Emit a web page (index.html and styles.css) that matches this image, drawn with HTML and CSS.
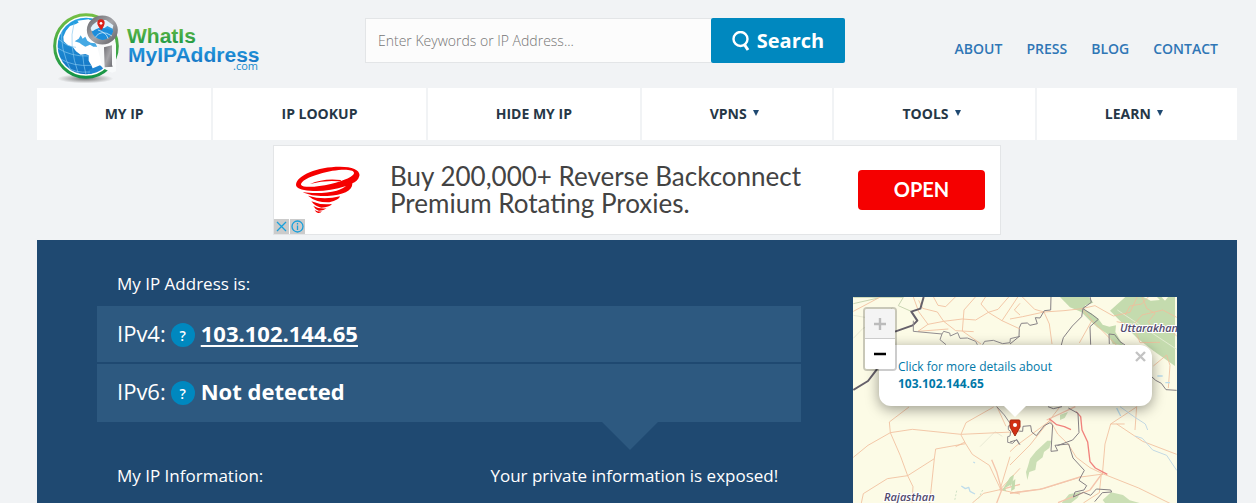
FILE: index.html
```html
<!DOCTYPE html>
<html lang="en">
<head>
<meta charset="utf-8">
<title>What Is My IP Address</title>
<link rel="stylesheet" href="styles.css">
</head>
<body>
<div class="shell">
  <header class="header">
    <a class="logo" href="#" aria-label="WhatIsMyIPAddress.com">
      <svg width="214" height="76" viewBox="48 8 214 76">
        <defs>
          <linearGradient id="green" x1="0" y1="0" x2="0" y2="1"><stop offset="0" stop-color="#74bf44"/><stop offset="1" stop-color="#149447"/></linearGradient>
          <linearGradient id="blue" x1="0" y1="0" x2="0" y2="1"><stop offset="0" stop-color="#27a5e5"/><stop offset="1" stop-color="#126fc0"/></linearGradient>
          <linearGradient id="steel" x1="0" y1="0" x2="1" y2="1"><stop offset="0" stop-color="#6f6f74"/><stop offset=".5" stop-color="#a5a5a9"/><stop offset="1" stop-color="#68686d"/></linearGradient>
          <radialGradient id="shade"><stop offset="0" stop-color="#777"/><stop offset="1" stop-color="#777" stop-opacity="0"/></radialGradient>
          <clipPath id="globe"><circle cx="114" cy="114" r="85"/></clipPath>
        </defs>
        <g transform="translate(48 8) scale(.333333)">
          <ellipse cx="112" cy="212" rx="84" ry="14" fill="url(#shade)"/>
          <circle cx="114" cy="114" r="94" fill="#fff" stroke="url(#green)" stroke-width="9"/>
          <g clip-path="url(#globe)">
            <path d="M20 20H150V42L128 36 112 44 98 40 84 48 66 54 54 68 46 86 47 100 60 112 74 116 84 130 98 140 112 138 122 142 122 158 130 172 136 186 124 210H20Z" fill="url(#blue)"/>
            <path d="M88 38L122 34 134 42 124 54 108 58 96 48Z" fill="#fff"/>
            <path d="M92 92L98 82 104 92 112 86 118 98 128 104 142 106 148 116 136 116 126 110 112 116 102 110 94 104 80 100Z" fill="#45a9e4"/>
            <path d="M122 186l34-14 14 12-20 24h-34z" fill="#1f86d2"/>
            <path d="M42 60Q34 120 70 190M78 46Q60 110 92 200M28 120Q70 146 120 144M36 152Q76 176 130 172M50 174Q80 196 126 192M104 140Q106 170 114 200M30 92Q56 116 84 118" fill="none" stroke="#86c9f0" stroke-width="2"/>
          </g>
          <path d="M146 110Q190 112 198 90L204 112V190L192 194 164 180Z" fill="#f8fafb"/>
          <path d="M168 118L192 112V170L194 176 170 178Z" fill="url(#steel)"/>
          <ellipse cx="163" cy="66" rx="39" ry="36" fill="#2c9be0" stroke="url(#steel)" stroke-width="15"/>
          <path d="M128 60Q142 34 174 36L196 52 194 62 178 54 166 62 152 60 140 70 130 68Z" fill="#dff1fb"/>
          <path d="M132 72Q152 50 196 68 188 92 164 96 144 92 132 72Z" fill="#1b8ddb"/>
          <path d="M142 88Q158 62 192 84M150 66Q176 74 180 92" stroke="#c8e8fa" stroke-width="2.500" fill="none"/>
          <path d="M160 67Q147 51 148 45A11 11 0 0 1 170 45Q170 52 160 67Z" fill="#db2118"/><circle cx="159" cy="46" r="4" fill="#fff"/>
        </g>
        <text class="logo-what" x="127" y="43" fill="url(#green)">WhatIs</text>
        <text class="logo-my" x="128" y="62" fill="url(#blue)">MyIPAddress</text>
        <text class="logo-com" x="258" y="70" text-anchor="end" fill="#168bcd">.com</text>
      </svg>
    </a>
    <form class="search">
      <input class="search-input" type="text" aria-label="Keywords or IP address" placeholder="Enter Keywords or IP Address...">
      <button class="search-button" type="button">
        <svg width="18" height="20" viewBox="0 0 18 20" fill="none" stroke="#fff"><circle cx="8.500" cy="8" r="7" stroke-width="2.400"/><path d="M12 13l4 6" stroke-width="3"/></svg>
        Search
      </button>
    </form>
    <nav class="top-links" aria-label="Site">
      <a href="#">ABOUT</a><a href="#">PRESS</a><a href="#">BLOG</a><a href="#">CONTACT</a>
    </nav>
  </header>

  <nav class="main-nav" aria-label="Main">
    <a class="w-first" href="#">MY IP</a>
    <a class="w-wide" href="#">IP LOOKUP</a>
    <a class="w-wide" href="#">HIDE MY IP</a>
    <a class="w-vpn" href="#">VPNS <span class="caret"></span></a>
    <a class="w-menu" href="#">TOOLS <span class="caret"></span></a>
    <a class="w-menu" href="#">LEARN <span class="caret"></span></a>
  </nav>

  <aside class="ad" aria-label="Advertisement">
    <svg class="ad-logo" width="64" height="48" viewBox="18 18 192 144" fill="#f50000">
      <path fill-rule="evenodd" d="M18 74C20 46 82 20 150 20 190 20 212 32 208 48 205 60 196 66 187 70 188 92 160 105 112 108 84 109 56 106 38 96 66 101 108 101 140 92 154 87 164 82 168 78 130 90 92 95 60 92 34 90 18 84 18 74ZM33 74C38 84 80 82 122 72 166 61 194 48 192 38 188 24 132 28 88 42 54 52 32 64 33 74Z"/>
      <path d="M60 72Q100 54 152 60 156 62 146 64 104 60 60 72ZM54 107Q100 121 150 109 148 120 118 127 78 128 54 107ZM64 124Q92 136 126 132 118 142 94 143 76 140 64 124ZM70 138Q88 148 110 145 100 153 86 152 76 149 70 138ZM74 150Q84 156 96 154 92 160 84 159 78 158 74 150Z"/>
    </svg>
    <p class="ad-text">Buy 200,000+ Reverse Backconnect Premium Rotating Proxies.</p>
    <button class="ad-open" type="button">OPEN</button>
    <div class="ad-badges">
      <button type="button" aria-label="Close ad"><svg width="15" height="15" viewBox="0 0 15 15"><path d="M3 3l9 9M12 3l-9 9" stroke="#18a0dc" stroke-width="1.300"/></svg></button>
      <button type="button" aria-label="About this ad"><svg width="15" height="15" viewBox="0 0 15 15" fill="none" stroke="#18a0dc" stroke-width="1.300"><circle cx="7.500" cy="7.500" r="5.500"/><path d="M7.500 6.500v4.500M7.500 4v1.500"/></svg></button>
    </div>
  </aside>

  <main class="panel">
    <section class="info">
      <h1 class="label">My IP Address is:</h1>
      <div class="ip-box">
        <div class="ip-row">IPv4: <button class="help" type="button" aria-label="About IPv4">?</button> <a class="ip-value" href="#">103.102.144.65</a></div>
        <div class="ip-row last">IPv6: <button class="help" type="button" aria-label="About IPv6">?</button> <strong class="ip-value">Not detected</strong></div>
      </div>
      <div class="columns">
        <h2 class="label">My IP Information:</h2>
        <h2 class="label exposed">Your private information is exposed!</h2>
      </div>
    </section>
    <section class="map" aria-label="Map">
      <svg class="map-art" viewBox="0 0 324 206" preserveAspectRatio="xMinYMin slice">
        <rect width="324" height="600" fill="#fcfbe6"/>
        <g transform="translate(157 -7) scale(.333333)" fill="none" stroke-linejoin="round">
          <path fill="#c4dbae" d="M300 62L346 21H495V228L430 182L382 145Z"/>
          <path fill="#c4dbae" d="M150 21H236L250 38L226 46L222 58L244 70L266 88L278 104L298 110L318 106L316 126L330 150L340 166L308 162L296 134L262 112L240 92L214 66L180 52Z"/>
          <path fill="#fcfbe6" d="M398 20l24 12 28-2-10-10zM455 22l10 10 10-12z"/>
          <path d="M322 60L500 178" stroke="#e3ecd0" stroke-width="3"/>
          <path fill="#cbdfb5" d="M112 452l12 0-6 22-16 12-4 16-18 14-4 24-18 6-6 24-4-24 6-18 6-22 18-22zM150 374l24-8-10 18-14 6zM0 562l12-8-4 24-8 12zM155 639l22-26 36-8-10 18-20 16zM278 630l25-23 36 8 20 16 30 8H285z"/>
          <g stroke="#f0bd9b" stroke-width="2.500">
            <path d="M36 20L74 58L102 66L162 62L215 56L255 47L310 78L360 67L382 20M215 56L246 91L208 159M0 87L38 80L102 66L118 102L126 162M246 91L320 166M430 228L470 195L480 226L475 294M396 20L410 55L435 70L415 95L430 118L480 120L500 138M320 95L370 105L396 75L458 60L500 82M345 76L360 48L395 42L415 21M370 105L390 158L450 157"/>
            <path d="M0 525L60 465L110 402L150 350M120 390L143 432L174 462L199 502L240 533L280 552L386 594L500 650M277 555L285 462L302 402L378 352M320 402L398 454L500 493M0 609L100 596L213 561L280 552M274 552L268 608L220 639M0 485L18 468L120 392M380 349L375 420M302 402L344 402"/>
          </g>
          <g stroke="#f4c5ac" stroke-width="4"><path d="M144 638L240 600L273 555M0 610L90 598L215 559M110 390L196 350"/></g>
          <path stroke="#f1827d" stroke-width="4" d="M118 386L140 404L163 410L183 419M198 365L212 380L216 420L233 456L240 515L256 534L292 553"/>
          <g stroke="#858084" stroke-width="3">
            <path d="M240 20L244 37L219 55L215 80L187 108L160 143L154 165M219 56L248 75L265 88L240 110L242 164M123 20L122 60L103 62L90 84L76 83L82 101L60 106L52 99L34 100L28 113L27 140L0 162M298 162L297 132L314 134L330 155L345 165M425 260L437 271L454 280L468 299L500 301"/>
            <path d="M28 463L20 450L0 456M20 423L38 424L39 409L62 407L65 426L79 437L103 407L120 398L128 405L123 484L143 482L135 466L176 462L189 504L223 541L207 571L230 587L222 600L195 606L190 621L220 607L242 616L259 597L302 600L305 606L277 608L254 635M175 354L204 370L207 428L188 450L142 467M114 350L130 356L156 350"/>
          </g>
          <path d="M330 350L375 382L406 402L413 420M375 438L397 445L428 480L470 496L500 541" stroke="#c3d9e4" stroke-width="3"/>
          <path d="M442 258h16M466 278h14M320 354l12 24" stroke="#b9dceb" stroke-width="4"/>
        </g>
        <g transform="translate(-3 -7) scale(.333333)" fill="none" stroke-linejoin="round">
          <path d="M10 41L85 24M10 22H160L145 47L188 66" stroke="#c8d4b1" stroke-width="3"/>
          <path d="M10 76l58 10M10 145l29-30 46-20 42-42M390 470l45-45 22 14" stroke="#dedfca" stroke-width="2"/>
          <g stroke="#f0bd9b" stroke-width="2.500">
            <path d="M190 21L206 65L234 103L281 94L337 87L377 90L415 67L456 92L510 117M281 94L317 122L371 125M377 20L342 60L337 123L393 162M415 67L393 42L407 20M456 92L504 20M250 20L264 46L287 50L316 21M234 103L204 124L295 117M510 40L493 60L510 75M10 64L91 21M476 21L444 58L415 67M281 94L262 66L218 55L206 31"/>
            <path d="M10 502L54 466L121 428L187 418L333 433L510 425M121 428L118 396L177 351M121 428L151 497L173 557L253 506L257 477L347 461L367 493L418 526L452 598M173 557L189 590L186 640M173 557L112 566L40 611L34 639M253 506L239 639M333 433L348 398L431 351M347 461L333 435M367 639L401 610L450 599L510 535M480 500L450 599L510 612M441 350L468 409M317 470L345 456"/>
          </g>
          <path d="M425 509L440 545L455 600L440 639M449 600L510 583" stroke="#f4c5ac" stroke-width="4"/>
          <path d="M10 300L54 273L80 239L92 164M135 125L188 106L202 92L184 65L211 56L221 21" stroke="#65606a" stroke-width="6"/>
          <path d="M190 92V124L276 132L281 124L299 129L301 138L323 128L330 145L352 144L377 154L382 164M276 132L270 149L288 164M398 164L404 154L430 151L458 161L480 158L481 146L510 139M440 350L463 375L480 400M484 403L475 408V419L482 424L480 438L473 440V457L488 460 500 448 510 464" stroke="#918d90" stroke-width="3"/>
          <path d="M479 563l11-8-8 29-17 10 4 10-12-4zM486 575l10-8-2 30-11 6z" fill="#c4dbae"/>
          <path d="M334 588l12 8 10-4 4 12 15 8M370 516l5 3" stroke="#bedceb" stroke-width="4"/>
          <path d="M320 602l-6 30M398 600l-14 28" stroke="#cfe1c5" stroke-width="3" stroke-dasharray="6 5"/>
        </g>
        <g class="places"><text x="31" y="204">Rajasthan</text><text x="267" y="35">Uttarakhand</text></g>
        <path d="M157 124q0-1 1-1h8q1 0 1 1v6l-5 9-5-9z" fill="#d32f12" stroke="#a52a10"/><circle cx="162" cy="128" r="2" fill="#fff"/>
      </svg>
      <div class="popup">
        <a href="#">Click for more details about<br><strong>103.102.144.65</strong></a>
        <button class="popup-close" type="button" aria-label="Close popup"><svg width="11" height="11" viewBox="0 0 11 11"><path d="M1 1l9 9M10 1l-9 9" stroke="#c3c3c3" stroke-width="2.400"/></svg></button>
      </div>
      <div class="zoom">
        <button type="button" aria-label="Zoom in" disabled><svg width="14" height="14" viewBox="0 0 14 14"><path d="M1 7h12M7 1v12" stroke="#bbb" stroke-width="2.400"/></svg></button>
        <button type="button" aria-label="Zoom out"><svg width="14" height="14" viewBox="0 0 14 14"><path d="M1 7h12" stroke="#000" stroke-width="2.400"/></svg></button>
      </div>
    </section>
  </main>
</div>
</body>
</html>
```
FILE: styles.css
```css
* { box-sizing: border-box; }
body {
  margin: 0;
  background: #f1f3f5;
  font-family: "Open Sans", "Noto Sans", sans-serif;
}
a { text-decoration: none; }
button { font-family: inherit; cursor: pointer; padding: 0; border: 0; }
svg { display: block; }

.shell {
  display: flex;
  flex-direction: column;
  min-height: 100vh;
  padding: 0 19px 0 37px;
}

.header {
  display: flex;
  align-items: flex-start;
  padding: 8px 19px 4px 11px;
}
.logo-what, .logo-my { font-family: "Liberation Sans", Arial, sans-serif; font-weight: 700; }
.logo-what { font-size: 21px; }
.logo-my { font-size: 21px; }
.logo-com { font-size: 11px; }

.search { display: flex; margin: 10px 0 0 103px; flex: 0 1 480px; }
.search-input {
  flex: 1;
  min-width: 0;
  height: 45px;
  padding: 0 12px;
  border: 1px solid #e3e5e7;
  border-right: 0;
  background: #fcfcfc;
  font: 300 14px "Open Sans", sans-serif;
  color: #444;
}
.search-input::placeholder { color: #757575; opacity: 1; }
.search-button {
  display: flex;
  align-items: center;
  justify-content: center;
  gap: 7px;
  width: 134px;
  height: 45px;
  border-radius: 2px;
  background: #0088bf;
  color: #fff;
  font-size: 20px;
  font-weight: 700;
}

.top-links { display: flex; gap: 24px; margin: 31px 0 0 auto; }
.top-links a { color: #2f76b5; font-size: 14px; line-height: 20px; font-weight: 600; }

.main-nav { display: flex; gap: 2px; }
.main-nav a {
  display: flex;
  align-items: center;
  justify-content: center;
  height: 52px;
  padding-bottom: 2px;
  background: #fff;
  color: #263746;
  font-size: 14px;
  font-weight: 700;
}
.w-first { flex: 174 1 0; }
.w-wide { flex: 212 1 0; }
.w-vpn { flex: 190 1 0; }
.w-menu { flex: 200 1 0; }
.caret {
  margin: 0 6px;
  border: 3px solid transparent;
  border-top: 6px solid #1f4971;
  border-bottom: 0;
}

.ad {
  position: relative;
  display: flex;
  align-items: center;
  align-self: center;
  width: 728px;
  max-width: 100%;
  height: 90px;
  margin: 5px 0;
  padding: 0 15px 0 22px;
  border: 1px solid #e3e5e7;
  background: #fff;
}
.ad-text {
  flex: 1;
  margin: 0 40px 0 30px;
  color: #434343;
  font: 400 26px/27px Lato, sans-serif;
}
.ad-open {
  width: 127px;
  height: 40px;
  padding-bottom: 3px;
  border-radius: 4px;
  background: #f50000;
  color: #fff;
  font: 700 20px Lato, sans-serif;
}
.ad-badges { position: absolute; left: 0; bottom: 0; display: flex; gap: 1px; }
.ad-badges button { background: #cbcbcb; }

.panel {
  flex: 1;
  display: flex;
  justify-content: space-between;
  padding: 0 60px;
  background: #1f4971;
  color: #fff;
}
.info { flex: 0 1 704px; padding-top: 32px; }
.label { margin: 0; padding: 0 20px; font-size: 17px; line-height: 24px; font-weight: 400; }
.ip-box { position: relative; margin-top: 10px; }
.ip-box::after {
  content: "";
  position: absolute;
  top: 100%;
  left: 505px;
  border: 28px solid transparent;
  border-top-color: #2d5980;
  border-bottom: 0;
}
.ip-row {
  display: flex;
  align-items: center;
  height: 56px;
  padding: 0 20px 2px;
  background: #2d5980;
  font-size: 22px;
}
.last { height: 58px; margin-top: 2px; padding-bottom: 4px; }
.help {
  width: 24px;
  height: 24px;
  margin: 4px 6px 0 5px;
  border-radius: 50%;
  background: #0088bf;
  color: #fff;
  font-size: 14px;
  font-weight: 600;
}
.ip-value { color: #fff; font-weight: 700; }
a.ip-value { text-decoration: underline; text-decoration-thickness: 2px; text-underline-offset: 3px; }
.columns { display: flex; margin-top: 42px; }
.columns .label { flex: 373 1 0; }
.columns .exposed { flex: 325 1 0; white-space: nowrap; }

.map { position: relative; width: 324px; min-height: 206px; margin-top: 57px; overflow: hidden; }
.map-art { width: 100%; height: 100%; }
.places text { font: italic 600 11px "Open Sans", sans-serif; fill: #51496b; stroke: #fff; stroke-width: 2px; paint-order: stroke; }
.popup {
  position: absolute;
  left: 26px;
  top: 48px;
  width: 273px;
  padding: 13px 19px 14px;
  border-radius: 12px;
  background: #fff;
  box-shadow: 0 3px 14px rgba(0, 0, 0, .4);
  font-size: 12px;
  line-height: 17px;
}
.popup::after {
  content: "";
  position: absolute;
  top: 100%;
  left: 125px;
  border: 11px solid transparent;
  border-top-color: #fff;
  border-bottom: 0;
}
.popup a { color: #0078a8; }
.popup-close { position: absolute; top: 6px; right: 6px; background: none; }
.zoom { position: absolute; left: 10px; top: 10px; border: 2px solid rgba(0, 0, 0, .2); border-radius: 4px; background-clip: padding-box; overflow: hidden; }
.zoom button { display: grid; place-items: center; width: 30px; height: 30px; background: #fff; }
.zoom button:disabled { background: #f4f4f4; border-bottom: 1px solid #ccc; }
```
